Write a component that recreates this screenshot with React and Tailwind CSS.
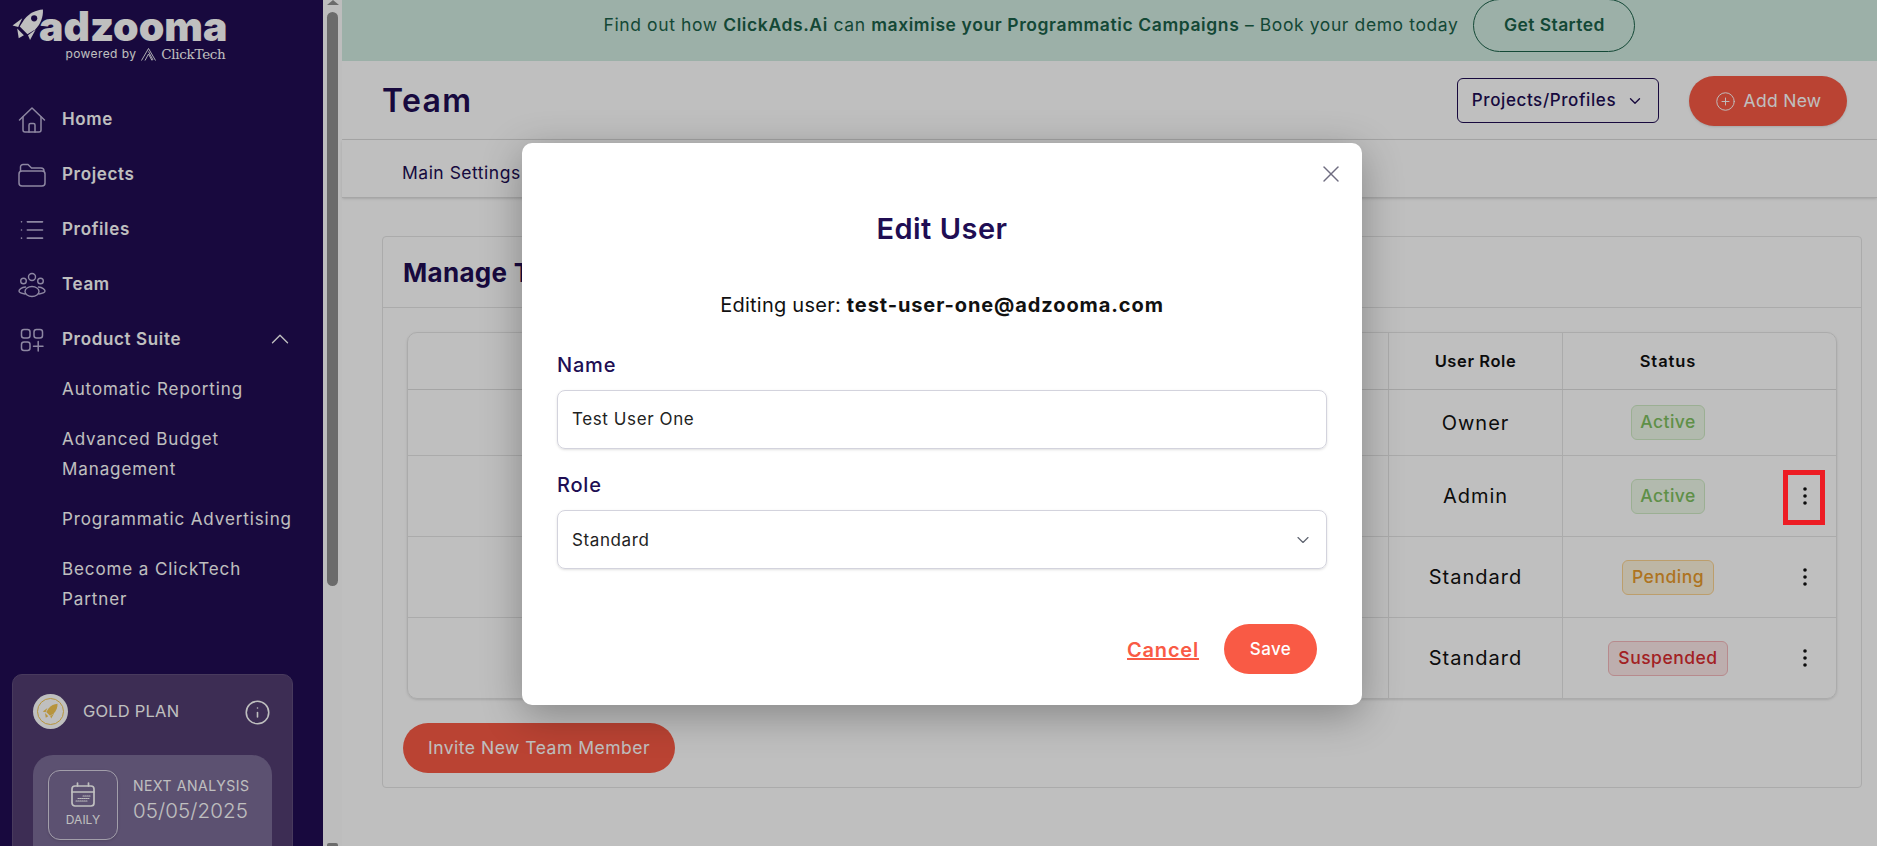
import React from "react";
import { ChevronDown, ChevronUp, X, List, PlusCircle, Info } from "lucide-react";

function HomeIcon() {
  return (
    <svg width="28" height="28" viewBox="0 0 28 28" fill="none" stroke="currentColor" strokeWidth="1.5" strokeLinecap="round" strokeLinejoin="round">
      <path d="M1.5 14 L14 2 L26.5 14" />
      <path d="M5 11 V24 a2 2 0 0 0 2 2 H21 a2 2 0 0 0 2 -2 V11" />
      <path d="M11 26 V19 a1.5 1.5 0 0 1 1.5 -1.5 h3 a1.5 1.5 0 0 1 1.5 1.5 V26" />
    </svg>
  );
}
function FolderIcon() {
  return (
    <svg width="28" height="24" viewBox="0 0 28 24" fill="none" stroke="currentColor" strokeWidth="1.5" strokeLinecap="round" strokeLinejoin="round">
      <rect x="1" y="8" width="26" height="15" rx="3" />
      <path d="M2.5 8 V4 a2.5 2.5 0 0 1 2.5 -2.5 H10 L13.5 5 H23 a3 3 0 0 1 3 3" />
    </svg>
  );
}
function TeamIcon() {
  return (
    <svg width="28" height="26" viewBox="0 0 28 26" fill="none" stroke="currentColor" strokeWidth="1.4" strokeLinecap="round">
      <circle cx="14" cy="5" r="3.5" />
      <circle cx="5.5" cy="9" r="2.8" />
      <circle cx="22.5" cy="9" r="2.8" />
      <ellipse cx="14" cy="19.5" rx="7" ry="5" />
      <path d="M7.5 15 C3.5 15.5 1 17.5 1 19 C1 20.5 3.5 21.5 7 22" />
      <path d="M20.5 15 C24.5 15.5 27 17.5 27 19 C27 20.5 24.5 21.5 21 22" />
    </svg>
  );
}
function SuiteIcon() {
  return (
    <svg width="24" height="24" viewBox="0 0 24 24" fill="none" stroke="currentColor" strokeWidth="1.5" strokeLinecap="round">
      <rect x="1.5" y="1.5" width="8.5" height="8.5" rx="2.5" />
      <rect x="14" y="1.5" width="8.5" height="8.5" rx="2.5" />
      <rect x="1.5" y="14" width="8.5" height="8.5" rx="2.5" />
      <path d="M18.2 13.5 V23 M13.5 18.2 H23" />
    </svg>
  );
}
function Rocket({ className, hole }) {
  return (
    <svg className={className} viewBox="0 0 34 34" fill="currentColor">
      <path d="M31 1.5 C24 2 18 5 13 11 L8.5 18 L16 25.5 L23.5 21 C29 15.5 31.5 8 31 1.5 Z" />
      <path d="M1.5 17 L11 10 L7 18.5 Z" />
      <path d="M18.5 31 L24 21 L16.5 26.5 Z" />
      <path d="M6 20 L12.5 26.5 L7.5 29.5 Z" />
      <circle cx="22.5" cy="10" r="3" fill={hole} />
    </svg>
  );
}
function CalendarIcon() {
  return (
    <svg width="26" height="26" viewBox="0 0 26 26" fill="none" stroke="currentColor" strokeWidth="1.7" strokeLinecap="round">
      <rect x="2" y="4" width="22" height="20" rx="3" />
      <path d="M2 10 H24 M7.5 1 V4 M18.5 1 V4" />
      <path strokeWidth="1.1" strokeDasharray="1 1" d="M13 14 H20 M8 16.5 H20 M6 19 H17" />
    </svg>
  );
}
function Kebab() {
  return (
    <svg width="6" height="20" viewBox="0 0 6 20" fill="#111111">
      <circle cx="3" cy="3" r="1.8" />
      <circle cx="3" cy="10" r="1.8" />
      <circle cx="3" cy="17" r="1.8" />
    </svg>
  );
}

const navItems = [
  { label: "Home", icon: <HomeIcon /> },
  { label: "Projects", icon: <FolderIcon /> },
  { label: "Profiles", icon: <List size={28} strokeWidth={1.4} /> },
  { label: "Team", icon: <TeamIcon /> },
];

const rows = [
  { role: "Owner", status: "Active", h: "h-[66px]", cls: "bg-[#eef8e9] border-[#cfeac4] text-[#7ec05f] w-[74px]", menu: false },
  { role: "Admin", status: "Active", h: "h-[81px]", cls: "bg-[#eef8e9] border-[#cfeac4] text-[#7ec05f] w-[74px]", menu: true },
  { role: "Standard", status: "Pending", h: "h-[81px]", cls: "bg-[#fdf3dc] border-[#fbd391] text-[#e89a2b] w-[92px]", menu: true },
  { role: "Standard", status: "Suspended", h: "h-[80px]", cls: "bg-[#fde8e8] border-[#f5b9bc] text-[#d92b2f] w-[120px]", menu: true },
];

export default function App() {
  return (
    <div className="relative flex h-[846px] w-[1877px] overflow-hidden bg-white font-['Inter',sans-serif]">
      {/* Sidebar */}
      <aside className="flex w-[323px] shrink-0 flex-col bg-[#200d53] text-white">
        <div className="relative h-[92px] shrink-0">
          <div className="flex items-start pl-[11px] pt-[8px]">
            <Rocket className="h-[35px] w-[35px] shrink-0 text-white" hole="#200d53" />
            <div className="-ml-[7px] flex flex-col items-end">
              <span className="mt-[1px] text-[41px] leading-[34px] font-black tracking-[0px] text-[#ffffff]">adzooma</span>
              <div className="mr-[2px] mt-[3px] flex items-center gap-[5px] text-[#ffffff]">
                <span className="text-[12px] leading-[16px] tracking-[0.4px]">powered by</span>
                <svg width="15" height="13" viewBox="0 0 15 13" fill="none" stroke="currentColor" strokeWidth="0.9"><path d="M0.5 12.5 L7.5 0.5 L14.5 12.5 M4 12.5 L7.5 6 L11 12.5 M7.5 3.5 L12 12" /></svg>
                <span className="font-['DejaVu_Serif',serif] text-[13.5px] leading-[16px] tracking-[-0.3px]">ClickTech</span>
              </div>
            </div>
          </div>
        </div>
        <nav className="flex flex-col">
          {navItems.map((n) => (
            <div key={n.label} className="flex h-[55px] items-center">
              <div className="flex w-[62px] justify-center pl-[2px] text-[#bdb4d8]">{n.icon}</div>
              <span className="text-[17px] font-semibold tracking-[0.65px]">{n.label}</span>
            </div>
          ))}
          <div className="flex h-[55px] items-center">
            <div className="flex w-[62px] justify-center pl-[2px] text-[#bdb4d8]"><SuiteIcon /></div>
            <span className="text-[17px] font-semibold tracking-[0.65px]">Product Suite</span>
            <ChevronUp size={30} strokeWidth={1.1} className="ml-[84px] -mt-[2px]" />
          </div>
        </nav>
        <div className="flex flex-col gap-[20px] pl-[62px] pt-[7px] text-[17px] leading-[30px] tracking-[0.9px] text-white">
          <div>Automatic Reporting</div>
          <div>Advanced Budget<br />Management</div>
          <div>Programmatic Advertising</div>
          <div>Become a ClickTech<br />Partner</div>
        </div>
        <div className="mx-[12px] mt-[60px] h-[240px] w-[281px] shrink-0 rounded-[10px] border border-[#604e7c] bg-[#523d71] pl-[20px] pr-[21px] pt-[19px]">
          <div className="flex h-[35px] items-center">
            <div className="flex h-[35px] w-[35px] items-center justify-center rounded-full bg-white">
              <div className="flex h-[27px] w-[27px] items-center justify-center rounded-full border border-[#f5c652]">
                <Rocket className="h-[17px] w-[17px] text-[#f5c652]" hole="#f5c652" />
              </div>
            </div>
            <span className="ml-[15px] text-[16.5px] font-normal tracking-[0.2px] text-white">GOLD PLAN</span>
            <Info size={27} strokeWidth={1.4} className="ml-auto mr-[0px] mt-[1px] text-white" />
          </div>
          <div className="mt-[26px] flex h-[120px] w-[239px] rounded-[20px] bg-[#7b6c97] pl-[15px] pt-[15px]">
            <div className="flex h-[70px] w-[70px] flex-col items-center rounded-[12px] border border-[#d8d3e3] pt-[11px] text-white shadow-sm">
              <CalendarIcon />
              <span className="mt-[4px] text-[12px] leading-[15px]">DAILY</span>
            </div>
            <div className="ml-[15px] pt-[7px] text-white">
              <div className="text-[14px] leading-[18px] tracking-[0.55px]">NEXT ANALYSIS</div>
              <div className="mt-[1px] text-[20.5px] leading-[29px] font-light tracking-[0.1px]">05/05/2025</div>
            </div>
          </div>
        </div>
      </aside>

      {/* Page scrollbar */}
      <div className="flex w-[19px] shrink-0 flex-col items-center bg-[#fdfdfd]">
        <div className="h-0 w-0 border-x-[6px] border-b-[5px] border-x-transparent border-b-[#8f8f8f]" />
        <div className="mt-[7px] h-[574px] w-[11px] rounded-full bg-[#8f8f8f]" />
        <div className="mt-auto h-[3px] w-[11px] rounded-t-[2px] bg-[#8f8f8f]" />
      </div>

      {/* Main */}
      <main className="flex min-w-0 flex-1 flex-col bg-white">
        <div className="flex h-[61px] shrink-0 items-center justify-center gap-[15px] overflow-hidden bg-[#d1ebe1] pb-[11px] pl-[20px] text-[#1a6148]">
          <span className="text-[17.5px] tracking-[0.6px]">Find out how <b className="font-semibold">ClickAds.Ai</b> can <b className="font-semibold">maximise your Programmatic Campaigns</b> – Book your demo today</span>
          <span className="flex h-[53px] w-[162px] shrink-0 items-center justify-center rounded-full border border-[#1a6148] text-[17.5px] font-semibold tracking-[0.4px]">Get Started</span>
        </div>
        <header className="flex h-[79px] shrink-0 items-center justify-between border-b border-[#dedede] pl-[40px] pr-[30px]">
          <h1 className="pt-[1px] text-[32px] font-semibold tracking-[1.3px] text-[#200d53]">Team</h1>
          <div className="flex items-center gap-[30px]">
            <button className="flex h-[45px] w-[202px] items-center justify-center gap-[10px] rounded-[6px] border-[1.5px] border-[#200d53] pt-[1px] text-[17px] font-medium tracking-[0.6px] text-[#200d53]">
              Projects/Profiles <ChevronDown size={18} strokeWidth={1.8} />
            </button>
            <button className="mt-[2px] flex h-[50px] w-[158px] items-center justify-center gap-[8px] rounded-full bg-[#f95a45] pt-[1px] text-[17.5px] font-normal tracking-[0.3px] text-white shadow-sm">
              <PlusCircle size={21} strokeWidth={1.1} /> Add New
            </button>
          </div>
        </header>
        <div className="flex h-[58px] shrink-0 items-center border-b border-[#dedede] pl-[60px] pt-[9px] shadow-sm">
          <span className="text-[17.5px] tracking-[0.5px] text-[#200d53]">Main Settings</span>
        </div>
        <section className="ml-[40px] mr-[15px] mt-[38px] rounded-[4px] border border-[#e5e5e5]">
          <div className="flex h-[71px] items-center border-b border-[#e5e5e5] pl-[20px]">
            <h2 className="text-[26px] font-bold tracking-[0.3px] text-[#200d53]">Manage Team</h2>
          </div>
          <div className="pb-[14px] pl-[20px] pt-[24px]">
            <div className="ml-[4px] w-[1430px] overflow-hidden rounded-[10px] border border-[#e5e5e5] shadow-sm">
              <div className="flex h-[57px] items-center border-b border-[#dcdcdc]">
                <div className="h-full w-[981px] border-r border-[#e5e5e5]" />
                <div className="flex h-full w-[174px] items-center justify-center border-r border-[#e5e5e5] text-[16.5px] font-semibold tracking-[0.6px] text-[#111]">User Role</div>
                <div className="flex h-full w-[212px] items-center justify-center pr-[2px] text-[16.5px] font-semibold tracking-[0.9px] text-[#111]">Status</div>
              </div>
              {rows.map((r, i) => (
                <div key={i} className={`flex ${r.h} items-center ${i < 3 ? "border-b border-[#e5e5e5]" : ""}`}>
                  <div className="h-full w-[981px] border-r border-[#e5e5e5]" />
                  <div className="flex h-full w-[174px] items-center justify-center border-r border-[#e5e5e5] text-[20px] tracking-[1px] text-[#111]">{r.role}</div>
                  <div className="flex h-full w-[212px] items-center justify-center pr-[2px]">
                    <span className={`flex h-[35px] items-center justify-center rounded-[6px] border text-[17.5px] font-medium tracking-[0.5px] ${r.cls}`}>{r.status}</span>
                  </div>
                  <div className="flex h-full flex-1 items-center justify-center pr-[2px]">{r.menu && <Kebab />}</div>
                </div>
              ))}
            </div>
            <button className="mt-[24px] flex h-[50px] w-[272px] items-center justify-center rounded-full bg-[#f95a45] text-[17.5px] tracking-[0.5px] text-white">
              Invite New Team Member
            </button>
          </div>
        </section>
      </main>

      {/* Dim overlay with dialog */}
      <div className="absolute inset-0 bg-black/25 pl-[522px] pt-[143px]">
        <div className="relative flex h-[562px] w-[840px] flex-col rounded-[10px] bg-white px-[35px] shadow-[0_10px_40px_rgba(0,0,0,0.3)]">
          <X size={28} strokeWidth={1.2} className="absolute right-[17px] top-[17px] text-[#6f6c80]" />
          <h3 className="mt-[66px] text-center text-[29px] leading-[40px] font-semibold tracking-[0.5px] text-[#200d53]">Edit User</h3>
          <p className="mt-[42px] text-center text-[20px] leading-[28px] tracking-[0.25px] text-[#111]">Editing user: <b className="font-bold tracking-[0.9px]">test-user-one@adzooma.com</b></p>
          <label className="mt-[34px] text-[20px] leading-[24px] font-medium tracking-[0.8px] text-[#200d53]">Name</label>
          <div className="mt-[13px] flex h-[59px] items-center rounded-[8px] border border-[#d3d3dd] pl-[14px] pt-[1px] text-[17px] font-normal tracking-[0.6px] text-[#222] shadow-sm">Test User One</div>
          <label className="mt-[24px] text-[20px] leading-[24px] font-medium tracking-[0.8px] text-[#200d53]">Role</label>
          <div className="mt-[13px] flex h-[59px] items-center justify-between rounded-[8px] border border-[#d3d3dd] pl-[14px] pr-[13px] pt-[2px] text-[17px] font-normal tracking-[0.6px] text-[#222] shadow-sm">
            Standard <ChevronDown size={20} strokeWidth={1.4} className="-mt-[2px] text-[#5f6470]" />
          </div>
          <div className="mr-[10px] mt-[55px] flex items-center justify-end gap-[25px]">
            <span className="pt-[1px] text-[20px] font-semibold tracking-[0.8px] text-[#f95a45] underline">Cancel</span>
            <button className="flex h-[50px] w-[93px] items-center justify-center rounded-full bg-[#f95a45] pt-[1px] text-[17px] font-medium tracking-[0.4px] text-white">Save</button>
          </div>
        </div>
      </div>

      {/* Annotation highlight */}
      <div className="absolute left-[1783px] top-[470px] h-[55px] w-[42px] border-[5px] border-[#ed1c24]" />
    </div>
  );
}
